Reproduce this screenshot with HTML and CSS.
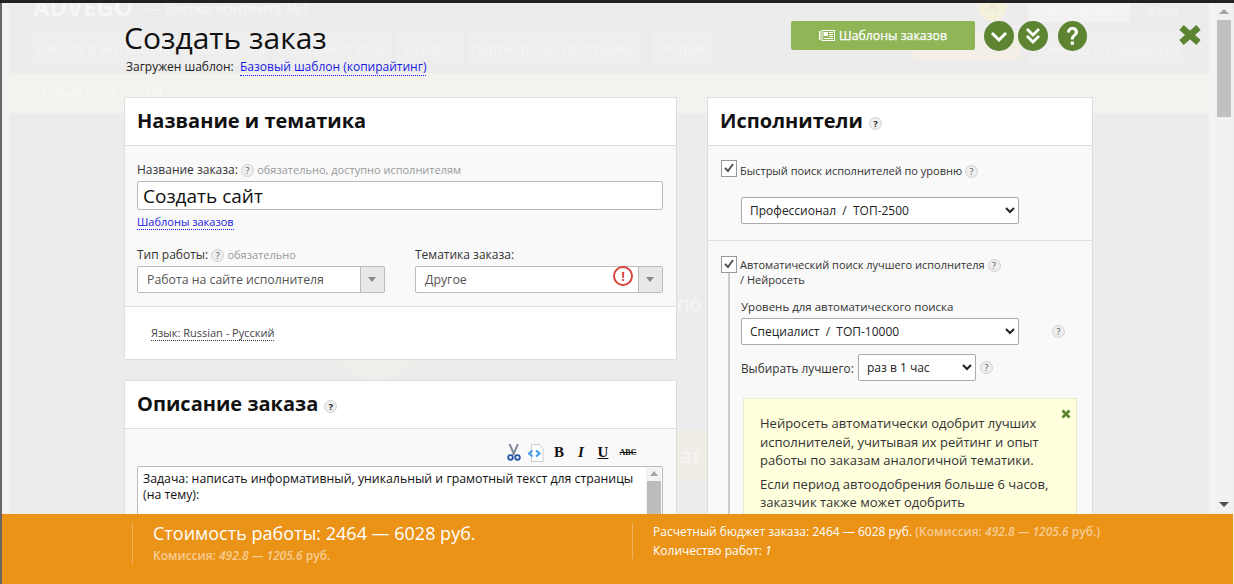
FILE: index.html
```html
<!DOCTYPE html>
<html lang="ru">
<head>
<meta charset="utf-8">
<title>Создать заказ</title>
<link rel="stylesheet" href="styles.css">
</head>
<body>
<div class="topbar"></div>
<div class="stage">
  <div class="strip"></div>
  <div class="viewport">
    <div class="ghost">
      <div class="g-top">
        <span class="g-logo">ADVEGO</span>
        <span class="g-slogan">— биржа контента №1</span>
        <span class="g-coin">A</span>
        <span class="g-reg">Регистрация</span>
        <span class="g-login">Вход</span>
      </div>
      <div class="g-nav">
        <span class="g-tab w1">Работа в интернете</span>
        <span class="g-tab w2">Заказчикам</span>
        <span class="g-tab w3">Магазин статей</span>
        <span class="g-tab w4">Сервис</span>
        <span class="g-tab w5">Партнёрская программа</span>
        <span class="g-tab w6">Форум</span>
        <span class="g-order"></span>
        <span class="g-tab g-help">Помощь и поддержка</span>
      </div>
      <div class="g-sub"><span>Новый заказ</span><span>API</span></div>
    </div>
    <div class="g-overlay g-sun"></div>
    <div class="g-overlay g-po">по</div>
    <div class="g-overlay g-at">ат</div>

    <div class="modal">
      <header class="m-head">
        <div class="m-title">
          <h1>Создать заказ</h1>
          <p class="m-loaded">Загружен шаблон: &nbsp;<a class="dotted" href="#">Базовый шаблон (копирайтинг)</a></p>
        </div>
        <div class="m-actions">
          <a class="btn-tpl" href="#">
            <svg width="16" height="11" viewBox="0 0 16 11"><path fill="#fff" d="M0 1h1.500v9H0zM2.500 0H16v11H2.500zM3.500 1v9H15V1z"/><path fill="#fff" d="M4.500 2H9v4H4.500zM10 2h4v1h-4zM10 4h4v1h-4zM10 6h4v1h-4zM4.500 8H14v1H4.500z"/></svg>
            Шаблоны заказов
          </a>
          <span class="circle c1"><svg width="30" height="30" viewBox="0 0 30 30"><path d="M8 12l7 7 7-7" fill="none" stroke="#fff" stroke-width="3"/></svg></span>
          <span class="circle c2"><svg width="30" height="30" viewBox="0 0 30 30"><path d="M9 8l6 6 6-6M9 15l6 6 6-6" fill="none" stroke="#fff" stroke-width="2.800"/></svg></span>
          <span class="circle c3"><svg width="29" height="30" viewBox="0 0 29 30"><path d="M9 11.500c0-3.500 2.500-5.500 5.500-5.500 3.200 0 5.500 2 5.500 5 0 3.800-4.200 3.800-4.200 7.500h-3c0-5 4-4.800 4-7.500 0-1.200-1-2.200-2.300-2.200-1.500 0-2.400 1-2.500 2.700z" fill="#fff"/><path fill="#fff" d="M12.700 20.500h3.200v3.300h-3.200z"/></svg></span>
          <span class="close"><svg width="24" height="22" viewBox="0 0 24 22"><path d="M3.500 3.500l17 15M20.500 3.500l-17 15" stroke="#5c8431" stroke-width="6.500" fill="none"/></svg></span>
        </div>
      </header>

      <div class="cols">
        <div class="col-l">
          <section class="panel p1">
            <h2 class="p-h">Название и тематика</h2>
            <div class="p-b b1">
              <div class="lbl">Название заказа: <i class="q">?</i> <span class="hint">обязательно, доступно исполнителям</span></div>
              <div class="input">Создать сайт</div>
              <a class="dotted small" href="#">Шаблоны заказов</a>
              <div class="two">
                <div class="fld">
                  <div class="lbl">Тип работы: <i class="q">?</i> <span class="hint">обязательно</span></div>
                  <div class="combo"><span class="combo-t">Работа на сайте исполнителя</span><span class="combo-a"></span></div>
                </div>
                <div class="fld">
                  <div class="lbl">Тематика заказа:</div>
                  <div class="combo"><span class="combo-t">Другое</span><span class="warn">!</span><span class="combo-a"></span></div>
                </div>
              </div>
            </div>
            <div class="p-w"><span class="lang">Язык: Russian - Русский</span></div>
          </section>

          <section class="panel p2">
            <h2 class="p-h">Описание заказа <i class="q q-h">?</i></h2>
            <div class="p-b b2">
              <div class="toolbar">
                <svg class="ti" width="14" height="17" viewBox="0 0 14 17"><path d="M2.500 0l5 11M11 0L6 11" stroke="#7f8c9a" stroke-width="2" fill="none"/><circle cx="3.500" cy="13.500" r="2.300" fill="none" stroke="#2456a8" stroke-width="1.800"/><circle cx="10.500" cy="13.500" r="2.300" fill="none" stroke="#2456a8" stroke-width="1.800"/></svg>
                <svg class="ti" width="16" height="18" viewBox="0 0 16 18"><path d="M3.500.5H11L15 4.500V17.500H3.500z" fill="#fff" stroke="#ccc"/><path d="M4.500 6.500L1 9.500l3.500 3M8 6.500l3.500 3-3.500 3" fill="none" stroke="#4a9be8" stroke-width="2.200"/></svg>
                <b class="tb tb-b">B</b>
                <i class="tb tb-i">I</i>
                <u class="tb tb-u">U</u>
                <s class="tb tb-s">ABC</s>
              </div>
              <div class="area">
                <div class="area-t">Задача: написать информативный, уникальный и грамотный текст для страницы (на тему):</div>
                <div class="area-s"><span class="up"></span><span class="thumb"></span></div>
              </div>
            </div>
          </section>
        </div>

        <div class="col-r">
          <section class="panel">
            <h2 class="p-h">Исполнители <i class="q q-h">?</i></h2>
            <div class="p-b b3">
              <div class="chk-row">
                <span class="chk"><svg width="14" height="14" viewBox="0 0 14 14"><path d="M3 7l3 3 5-7" fill="none" stroke="#555" stroke-width="2"/></svg></span>
                <span class="chk-l">Быстрый поиск исполнителей по уровню <i class="q">?</i></span>
              </div>
              <select class="sel s-wide s-first"><option>Профессионал&nbsp; /&nbsp; ТОП-2500</option></select>
            </div>
            <div class="p-b b4">
              <div class="chk-row c-auto">
                <span class="chk"><svg width="14" height="14" viewBox="0 0 14 14"><path d="M3 7l3 3 5-7" fill="none" stroke="#555" stroke-width="2"/></svg></span>
                <span class="chk-l">Автоматический поиск лучшего исполнителя <i class="q">?</i><br>/ Нейросеть</span>
              </div>
              <div class="auto">
                <div class="auto-l">Уровень для автоматического поиска</div>
                <div class="auto-row">
                  <select class="sel s-wide"><option>Специалист&nbsp; /&nbsp; ТОП-10000</option></select>
                  <i class="q q-far">?</i>
                </div>
                <div class="auto-row r2">
                  <span class="auto-p">Выбирать лучшего:</span>
                  <select class="sel s-small"><option>раз в 1 час</option></select>
                  <i class="q">?</i>
                </div>
                <div class="note">
                  <svg class="note-x" width="10" height="10" viewBox="0 0 10 10"><path d="M1.500 1.500l7 7M8.500 1.500l-7 7" stroke="#5c8431" stroke-width="2.800" fill="none"/></svg>
                  <p>Нейросеть автоматически одобрит лучших исполнителей, учитывая их рейтинг и опыт работы по заказам аналогичной тематики.</p>
                  <p>Если период автоодобрения больше 6 часов, заказчик также может одобрить</p>
                </div>
              </div>
            </div>
          </section>
        </div>
      </div>
    </div>
  </div>
  <div class="sbar"><span class="sb-up"></span><span class="sb-th"></span><span class="sb-dn"></span></div>
</div>

<footer class="foot">
  <div class="f-block f1">
    <div class="f-cost">Стоимость работы: 2464 — 6028 руб.</div>
    <div class="f-fee">Комиссия: <em>492.8 — 1205.6</em> руб.</div>
  </div>
  <div class="f-block f2">
    <div class="f-line">Расчетный бюджет заказа: 2464 — 6028 руб. <span class="f-dim">(Комиссия: <em>492.8 — 1205.6</em> руб.)</span></div>
    <div class="f-line">Количество работ: <em>1</em></div>
  </div>
</footer>
</body>
</html>
```
FILE: styles.css
```css
* { box-sizing: border-box; }
html, body { margin: 0; height: 584px; overflow: hidden; }
body { position: relative; background: #ececec; font-family: "Open Sans", "Noto Sans", sans-serif; color: #222; }
i, em { font-style: normal; }
em { font-style: italic; }
a { color: #1a1ae6; text-decoration: none; }

.topbar { height: 3px; background: #222; }
.stage { display: flex; height: 581px; }
.strip { width: 2px; background: #666; }
.viewport { position: relative; flex: 1; overflow: hidden; background: linear-gradient(90deg, #f1f1f1 7px, #ececec 7px, #ececec 1207px, #f3f3f3 1207px); }

/* dimmed page behind the dialog */
.ghost { color: #f4f4f4; }
.g-top { height: 28px; display: flex; position: relative; padding-left: 31px; overflow: hidden; }
.g-logo { font: 700 24px/24px "Open Sans", sans-serif; margin-top: -8px; color: #f6f6f6; }
.g-slogan { font-size: 15px; line-height: 20px; margin-left: 13px; margin-top: -5px; }
.g-coin { position: absolute; left: 976px; top: -11px; width: 29px; height: 29px; border-radius: 50%; background: #f3f0dc; color: #eae6c8; text-align: center; font-size: 12px; line-height: 30px; }
.g-reg { position: absolute; left: 1026px; top: -3px; width: 102px; height: 22px; background: #f2f2f2; border-radius: 3px; text-align: center; font-size: 13px; line-height: 20px; color: #f8f8f8; }
.g-login { position: absolute; left: 1145px; top: -3px; font-size: 13px; line-height: 20px; }
.g-nav { height: 42px; display: flex; gap: 5px; padding-left: 30px; }
.g-tab { height: 34px; background: #eeeeee; border-radius: 3px; font-size: 14px; line-height: 35px; white-space: nowrap; text-align: center; overflow: hidden; }
.w1 { width: 145px; }
.w2 { width: 85px; }
.w3 { width: 119px; }
.w4 { width: 66px; }
.w5 { width: 175px; }
.w6 { width: 62px; margin-left: 4px; }
.g-order { width: 108px; height: 29px; margin-left: 195px; background: #f3efe6; border-radius: 3px; }
.g-help { margin-left: 1px; width: 158px; }
.g-sub { height: 40px; margin-left: 7px; width: 1200px; background: #f2f3ee; display: flex; gap: 28px; padding-left: 33px; font-size: 12px; line-height: 39px; color: #f8f9f5; }
.g-overlay { position: absolute; color: #f6f6f6; font-size: 20px; }
.g-sun { left: 318px; top: 265px; width: 112px; height: 110px; border-radius: 50%; background: #efefe9; }
.g-po { left: 675px; top: 287px; }
.g-at { left: 675px; top: 427px; width: 30px; height: 50px; background: #f0ede6; padding: 12px 3px; }

/* dialog */
.modal { position: absolute; inset: 0; padding-left: 122px; }
.m-head { height: 94px; display: flex; justify-content: space-between; padding-right: 13px; }
.m-title h1 { margin: 0; padding-top: 15px; font-weight: 400; font-size: 30px; line-height: 40px; color: #111; }
.m-loaded { margin: 0; padding-left: 2px; font-size: 12px; line-height: 17px; color: #222; }
.dotted { border-bottom: 1px dotted #1a1ae6; }
.m-actions { width: 411px; padding-top: 18px; display: flex; align-items: flex-start; }
.btn-tpl { width: 184px; height: 29px; background: #8fb557; border-radius: 2px; color: #fff; font-size: 12.300px; display: flex; align-items: center; justify-content: center; gap: 4px; -webkit-text-stroke: .25px #fff; }
.circle { width: 30px; height: 30px; border-radius: 50%; background: #5c8431; display: block; }
.circle svg { display: block; }
.c1 { margin-left: 9px; }
.c2 { margin-left: 4px; }
.c3 { width: 29px; margin-left: 10px; }
.close { margin-left: auto; margin-top: 3px; display: block; line-height: 0; }

.cols { display: flex; gap: 30px; align-items: flex-start; }
.col-l { width: 553px; display: flex; flex-direction: column; gap: 20px; }
.col-r { width: 386px; }
.panel { background: #fff; border: 1px solid #dedede; border-radius: 2px; }
.p-h { margin: 0; height: 48px; padding-left: 12px; font-size: 20px; line-height: 45px; font-weight: 700; color: #111; border-bottom: 1px solid #dedede; white-space: nowrap; }
.p-b { background: #f9f9f9; }
.q { display: inline-block; width: 13px; height: 13px; border-radius: 50%; background: #eee; border: 1px solid #d2d2d2; font-size: 9px; line-height: 11px; text-align: center; color: #555; vertical-align: 0; font-weight: 400; }
.q-h { vertical-align: 1px; font-weight: 700; color: #222; margin-left: 1px; }

.b1 { height: 161px; padding: 16px 13px 0 12px; border-bottom: 1px solid #dedede; }
.lbl { font-size: 12px; line-height: 16px; color: #333; white-space: nowrap; }
.hint { color: #999; font-size: 11px; }
.input { height: 29px; margin-top: 3px; border: 1px solid #bbb; border-radius: 2px; background: #fff; padding-left: 5px; font-size: 19px; line-height: 28px; color: #111; }
.small { display: block; width: fit-content; margin-top: 4px; font-size: 11px; line-height: 15px; }
.two { display: grid; grid-template-columns: 248px 248px; gap: 30px; margin-top: 17px; }
.combo { display: flex; align-items: center; position: relative; height: 27px; margin-top: 3px; background: #fff; border: 1px solid #bbb; border-radius: 2px; }
.combo-t { flex: 1; padding-left: 9px; font-size: 12.300px; color: #555; }
.combo-a { width: 24px; height: 100%; background: #e8e8e8; border-left: 1px solid #bbb; position: relative; }
.combo-a::after { content: ""; position: absolute; left: 7px; top: 10px; border: 4px solid transparent; border-top: 5px solid #888; }
.warn { position: absolute; right: 29px; top: -1px; width: 20px; height: 20px; border: 2px solid #d9433c; border-radius: 50%; color: #d9433c; font-size: 13px; font-weight: 700; line-height: 16px; text-align: center; }
.p-w { height: 52px; padding: 13px 0 0 26px; }
.lang { font-size: 11px; line-height: 14px; color: #444; border-bottom: 1px dotted #333; display: inline-block; }

.b2 { height: 300px; padding: 10px 13px 0 12px; }
.toolbar { height: 27px; display: flex; align-items: center; padding-left: 370px; }
.ti { display: block; }
.ti + .ti { margin-left: 7px; }
.tb { font-family: "Liberation Serif", serif; color: #111; text-align: center; display: block; }
.tb-b { font-size: 15px; font-weight: 700; width: 14px; margin-left: 8px; }
.tb-i { font-size: 15px; font-weight: 700; font-style: italic; width: 14px; margin-left: 8px; }
.tb-u { font-size: 15px; font-weight: 700; width: 14px; margin-left: 8px; }
.tb-s { font-size: 8px; font-weight: 700; width: 18px; margin-left: 9px; }
.area { height: 120px; background: #fff; border: 1px solid #bbb; border-radius: 2px; display: flex; }
.area-t { flex: 1; padding: 4px 12px 0 5px; font-size: 12.300px; line-height: 15.500px; color: #111; }
.area-s { width: 15px; flex: none; background: #f3f3f3; display: flex; flex-direction: column; align-items: center; margin-right: 1px; }
.up { margin-top: 4px; border: 4px solid transparent; border-bottom: 5px solid #a5a5a5; border-top: 0; }
.area-s .thumb { display: block; width: 14px; height: 60px; margin-top: 5px; background: #bcbcbc; }

.b3 { height: 95px; padding: 14px 0 0 13px; border-bottom: 1px solid #dedede; }
.chk-row { display: flex; }
.chk { flex: none; width: 16px; height: 17px; background: #fff; border: 1px solid #999; display: block; }
.chk svg { display: block; margin: 0; }
.chk-l { margin-left: 3px; font-size: 11px; line-height: 15px; color: #333; white-space: nowrap; padding-top: 3px; }
.c-auto .chk-l { padding-top: 1px; }
.sel { display: block; height: 27px; background: #fff; border: 1px solid #aaa; border-radius: 2px; font: 12px "Open Sans", sans-serif; color: #222; padding-left: 4px; }
.s-wide { width: 278px; }
.s-first { margin: 19px 0 0 20px; }
.b4 { height: 300px; padding-top: 15px; position: relative; }
.b4::before { content: ""; position: absolute; left: 20px; top: 32px; width: 2px; height: 260px; background: #ccc; }
.c-auto { padding-left: 13px; }
.auto { margin-left: 33px; padding-top: 12px; height: 240px; }
.auto-l { font-size: 11.500px; line-height: 16px; color: #333; }
.auto-row { display: flex; align-items: center; margin-top: 3px; }
.q-far { margin-left: 33px; }
.r2 { margin-top: 9px; }
.auto-p { font-size: 11.800px; color: #333; width: 117px; white-space: nowrap; }
.s-small { width: 118px; margin-right: 4px; }
.note { position: relative; width: 334px; margin: 17px 0 0 2px; padding: 15px 20px 0 16px; height: 130px; background: #ffffdd; border: 1px solid #ecebc6; font-size: 13px; line-height: 18.500px; color: #333; }
.note p { margin: 0 0 5px; }
.note-x { position: absolute; right: 5px; top: 10px; }

.sbar { width: 18px; margin-right: 1px; background: #f1f1f1; display: flex; flex-direction: column; align-items: center; position: relative; }
.sb-up { margin-top: 6px; border: 5px solid transparent; border-bottom: 5px solid #a3a3a3; border-top: 0; }
.sb-th { width: 14px; height: 97px; margin-top: 6px; background: #c1c1c1; }
.sb-dn { position: absolute; top: 499px; left: 4px; border: 5px solid transparent; border-top: 5px solid #505050; border-bottom: 0; }

.foot { position: absolute; left: 2px; right: 1px; bottom: 0; height: 70px; background: #ea9317; display: flex; padding: 9px 0 0 130px; color: #fff; }
.f-block { border-left: 1px solid rgba(255,255,255,.3); padding-left: 20px; white-space: nowrap; }
.f1 { width: 500px; height: 41px; }
.f2 { height: 36px; }
.f-cost { font-size: 18px; line-height: 20px; }
.f-fee { font-size: 12px; font-weight: 600; line-height: 16px; margin-top: 5px; color: #f8cc93; }
.f-line { font-size: 12px; line-height: 18.500px; }
.f-dim { color: #f8cc93; font-weight: 600; }
```
